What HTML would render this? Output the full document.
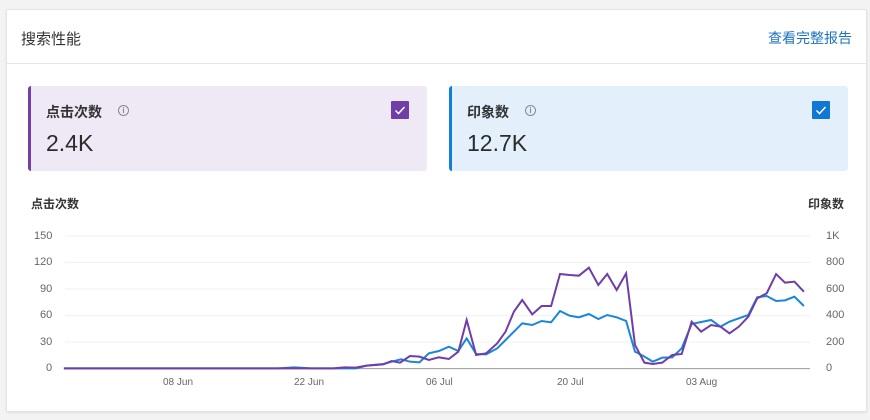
<!DOCTYPE html>
<html><head><meta charset="utf-8"><style>
*{margin:0;padding:0;box-sizing:border-box}
body{width:870px;height:420px;background:#f3f3f3;font-family:"Liberation Sans","Noto Sans CJK SC",sans-serif;position:relative;overflow:hidden;color:#2b2b2b}
.card{position:absolute;left:6px;top:9px;width:861px;height:403px;background:#fff;border:1px solid #e4e4e4;border-radius:2px;box-shadow:0 1px 2px rgba(0,0,0,.08)}
.hdr{position:absolute;left:0;top:0;width:100%;height:54px;border-bottom:1px solid #e6e6e6}
.t{position:absolute;left:14px;top:18px;font-size:15px;color:#333}
.lk{position:absolute;right:14px;top:18px;font-size:14px;color:#1e73be}
.m{position:absolute;top:86px;width:399px;height:85px;border-radius:3px}
.m .n{position:absolute;left:15px;top:16px;font-size:14px;font-weight:bold;color:#333}
.m .i{position:absolute;top:19px;width:11px;height:11px;border:1px solid #888;border-radius:50%;font-size:8px;line-height:9px;text-align:center;color:#888;font-weight:bold}
.m .v{position:absolute;left:15px;top:44px;font-size:23px;color:#2b2b2b}
.m .cb{position:absolute;top:15px;width:18px;height:18px;border-radius:1px}
.ax{position:absolute;font-size:11px;color:#666}
.ttl{position:absolute;top:195px;font-size:12px;font-weight:bold;color:#333}
</style></head><body>
<div class="card"><div class="hdr"><div class="t">搜索性能</div><div class="lk">查看完整报告</div></div></div>
<div class="m" style="left:28px;background:#efe8f5;border-left:3px solid #7340a8">
<div class="n">点击次数</div><div class="i" style="left:87px">i</div><div class="v">2.4K</div>
<div class="cb" style="left:360px;background:#6f3ea6"><svg width="18" height="18"><path d="M4.5 9.5l3 3 6-6.5" stroke="#fff" stroke-width="1.5" fill="none"/></svg></div></div>
<div class="m" style="left:449px;background:#e3f0fb;border-left:3px solid #0f7fdb">
<div class="n">印象数</div><div class="i" style="left:73px">i</div><div class="v">12.7K</div>
<div class="cb" style="left:360px;background:#0f78d4"><svg width="18" height="18"><path d="M4.5 9.5l3 3 6-6.5" stroke="#fff" stroke-width="1.5" fill="none"/></svg></div></div>
<div class="ttl" style="left:31px">点击次数</div>
<div class="ttl" style="right:26px">印象数</div>
<div class="ax" style="left:34px;top:230px">150</div><div class="ax" style="left:34px;top:256px">120</div>
<div class="ax" style="left:40px;top:283px">90</div><div class="ax" style="left:40px;top:309px">60</div>
<div class="ax" style="left:40px;top:336px">30</div><div class="ax" style="left:46px;top:362px">0</div>
<div class="ax" style="left:826px;top:230px">1K</div><div class="ax" style="left:826px;top:256px">800</div>
<div class="ax" style="left:826px;top:283px">600</div><div class="ax" style="left:826px;top:309px">400</div>
<div class="ax" style="left:826px;top:336px">200</div><div class="ax" style="left:826px;top:362px">0</div>
<div class="ax" style="left:163px;top:377px;font-size:10px">08 Jun</div>
<div class="ax" style="left:294px;top:377px;font-size:10px">22 Jun</div>
<div class="ax" style="left:426px;top:377px;font-size:10px">06 Jul</div>
<div class="ax" style="left:557px;top:377px;font-size:10px">20 Jul</div>
<div class="ax" style="left:686px;top:377px;font-size:10px">03 Aug</div>
<svg style="position:absolute;left:0;top:220px" width="870" height="200" viewBox="0 0 1566 600" preserveAspectRatio="none">
<g stroke="#f0f0f0" stroke-width="1" vector-effect="non-scaling-stroke">
<line x1="117" x2="1458" y1="48" y2="48" vector-effect="non-scaling-stroke"/><line x1="117" x2="1458" y1="127" y2="127" vector-effect="non-scaling-stroke"/><line x1="117" x2="1458" y1="207" y2="207" vector-effect="non-scaling-stroke"/><line x1="117" x2="1458" y1="287" y2="287" vector-effect="non-scaling-stroke"/><line x1="117" x2="1458" y1="366" y2="366" vector-effect="non-scaling-stroke"/></g>
<line x1="117" x2="1458" y1="446" y2="446" stroke="#999" vector-effect="non-scaling-stroke"/>
<polyline fill="none" stroke="#1a86d9" stroke-width="2" vector-effect="non-scaling-stroke" points="115,445 500,445 530,442 560,445 640,445 660,437 690,432 705,425 722,418 738,425 755,427 772,400 790,393 808,380 825,393 840,355 857,402 875,403 895,385 910,360 925,335 940,310 958,315 975,303 992,307 1008,273 1025,287 1042,292 1060,282 1077,297 1093,285 1110,292 1127,303 1143,395 1160,410 1175,425 1192,413 1210,412 1227,385 1245,312 1262,306 1280,300 1297,320 1313,305 1330,295 1347,285 1363,232 1380,228 1397,243 1413,241 1430,230 1447,258"/>
<polyline fill="none" stroke="#6f3ea6" stroke-width="2" vector-effect="non-scaling-stroke" points="115,445 600,445 620,442 640,443 660,437 690,433 705,423 720,428 738,408 755,410 772,420 790,412 808,417 825,395 840,300 857,405 875,400 895,370 910,335 925,275 940,240 958,283 975,258 992,258 1008,162 1025,165 1042,167 1060,143 1077,195 1093,162 1110,210 1127,160 1143,375 1160,428 1175,432 1192,428 1210,405 1227,402 1245,305 1262,335 1280,315 1297,320 1313,340 1330,320 1347,290 1363,235 1380,220 1397,162 1413,188 1430,185 1447,215"/>
</svg>
</body></html>
